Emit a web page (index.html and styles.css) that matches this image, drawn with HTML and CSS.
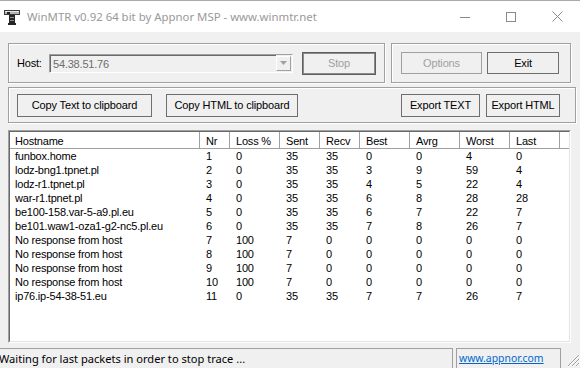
FILE: index.html
```html
<!DOCTYPE html>
<html lang="en">
<head>
    <meta charset="UTF-8">
    <title>WinMTR</title>
    <link rel="stylesheet" href="styles.css">
</head>
<body>
    <div class="titlebar">
        <svg class="app-icon" width="16" height="16" viewBox="0 0 16 16">
            <rect x="0.5" y="1.5" width="15" height="4" fill="#b4b4b4" stroke="#3a3a3a"/>
            <rect x="1" y="2" width="14" height="1" fill="#e6e6e6"/>
            <rect x="3" y="3" width="3" height="2" fill="#222"/>
            <rect x="5" y="6" width="6" height="9" fill="#262626"/>
            <rect x="6" y="8" width="4" height="1" fill="#8a8a8a"/>
            <rect x="6" y="11" width="4" height="1" fill="#8a8a8a"/>
            <rect x="4" y="14" width="8" height="2" fill="#262626"/>
        </svg>
        <span class="title">WinMTR v0.92 64 bit by Appnor MSP - www.winmtr.net</span>
        <div class="caption-btns">
            <span class="cap-btn">
                <svg width="10" height="10" viewBox="0 0 10 10"><path d="M0 5.5h10" stroke="#8a8a8a"/></svg>
            </span>
            <span class="cap-btn">
                <svg width="10" height="10" viewBox="0 0 10 10"><rect x="0.5" y="0.5" width="9" height="9" fill="none" stroke="#8a8a8a"/></svg>
            </span>
            <span class="cap-btn">
                <svg width="11" height="11" viewBox="0 0 11 11"><path d="M0.5 0.5l10 10M10.5 0.5l-10 10" stroke="#8a8a8a"/></svg>
            </span>
        </div>
    </div>

    <div class="client">
        <div class="row-top">
            <div class="group group-host">
                <span class="host-label">Host:</span>
                <div class="combo">
                    <span class="combo-text">54.38.51.76</span>
                    <span class="combo-drop">
                        <svg width="7" height="4" viewBox="0 0 7 4"><path d="M0 0h7L3.5 4z" fill="#a0a0a0"/></svg>
                    </span>
                </div>
                <button class="btn btn-default" disabled>Stop</button>
            </div>
            <div class="group group-opts">
                <button class="btn btn-options" disabled>Options</button>
                <button class="btn btn-exit">Exit</button>
            </div>
        </div>

        <div class="group group-export">
            <button class="btn btn-copy-text">Copy Text to clipboard</button>
            <button class="btn btn-copy-html">Copy HTML to clipboard</button>
            <button class="btn btn-export-text">Export TEXT</button>
            <button class="btn btn-export-html">Export HTML</button>
        </div>

        <div class="list">
            <div class="list-inner">
                <table>
                    <colgroup>
                        <col style="width:190px"><col style="width:30px"><col style="width:50px">
                        <col style="width:40px"><col style="width:40px"><col style="width:50px">
                        <col style="width:50px"><col style="width:50px"><col style="width:50px"><col>
                    </colgroup>
                    <thead>
                        <tr>
                            <th>Hostname</th><th>Nr</th><th>Loss %</th><th>Sent</th><th>Recv</th>
                            <th>Best</th><th>Avrg</th><th>Worst</th><th>Last</th><th class="filler"></th>
                        </tr>
                    </thead>
                    <tbody>
                        <tr><td>funbox.home</td><td>1</td><td>0</td><td>35</td><td>35</td><td>0</td><td>0</td><td>4</td><td>0</td><td></td></tr>
                        <tr><td>lodz-bng1.tpnet.pl</td><td>2</td><td>0</td><td>35</td><td>35</td><td>3</td><td>9</td><td>59</td><td>4</td><td></td></tr>
                        <tr><td>lodz-r1.tpnet.pl</td><td>3</td><td>0</td><td>35</td><td>35</td><td>4</td><td>5</td><td>22</td><td>4</td><td></td></tr>
                        <tr><td>war-r1.tpnet.pl</td><td>4</td><td>0</td><td>35</td><td>35</td><td>6</td><td>8</td><td>28</td><td>28</td><td></td></tr>
                        <tr><td>be100-158.var-5-a9.pl.eu</td><td>5</td><td>0</td><td>35</td><td>35</td><td>6</td><td>7</td><td>22</td><td>7</td><td></td></tr>
                        <tr><td>be101.waw1-oza1-g2-nc5.pl.eu</td><td>6</td><td>0</td><td>35</td><td>35</td><td>7</td><td>8</td><td>26</td><td>7</td><td></td></tr>
                        <tr><td>No response from host</td><td>7</td><td>100</td><td>7</td><td>0</td><td>0</td><td>0</td><td>0</td><td>0</td><td></td></tr>
                        <tr><td>No response from host</td><td>8</td><td>100</td><td>7</td><td>0</td><td>0</td><td>0</td><td>0</td><td>0</td><td></td></tr>
                        <tr><td>No response from host</td><td>9</td><td>100</td><td>7</td><td>0</td><td>0</td><td>0</td><td>0</td><td>0</td><td></td></tr>
                        <tr><td>No response from host</td><td>10</td><td>100</td><td>7</td><td>0</td><td>0</td><td>0</td><td>0</td><td>0</td><td></td></tr>
                        <tr><td>ip76.ip-54-38-51.eu</td><td>11</td><td>0</td><td>35</td><td>35</td><td>7</td><td>7</td><td>26</td><td>7</td><td></td></tr>
                    </tbody>
                </table>
            </div>
        </div>
    </div>

    <div class="statusbar">
        <div class="pane pane-main">Waiting for last packets in order to stop trace ...</div>
        <div class="pane pane-link"><a href="#">www.appnor.com</a></div>
        <svg class="grip" width="13" height="13" viewBox="0 0 13 13">
            <path d="M12 1L1 12M12 5L5 12M12 9L9 12" stroke="#a0a0a0"/>
            <path d="M13 1L1 13M13 5L5 13M13 9L9 13" stroke="#fff"/>
        </svg>
    </div>
</body>
</html>
```

FILE: styles.css
```css
body {
    margin: 0;
    width: 580px;
    height: 368px;
    overflow: hidden;
    background: #f0f0f0;
    font-family: 'Liberation Sans', Arial, sans-serif;
    font-size: 11px;
    color: #000;
}

/* title bar */
.titlebar {
    height: 31px;
    border-top: 1px solid #aaaaaa;
    background: #fff;
    display: flex;
    align-items: center;
}

.app-icon {
    margin-left: 4px;
    margin-right: 7px;
}

.title {
    font-family: 'Noto Sans', sans-serif;
    font-size: 11.4px;
    color: #999;
}

.caption-btns {
    margin-left: auto;
    display: flex;
    align-self: stretch;
}

.cap-btn {
    width: 46px;
    display: flex;
    align-items: center;
    justify-content: center;
}

/* client area */
.client {
    padding: 11px 0 0 8px;
}

.row-top {
    display: flex;
    gap: 6px;
    height: 40px;
}

.group {
    box-sizing: border-box;
    border: 1px solid #a0a0a0;
    box-shadow: inset 1px 1px 0 #fff, 1px 1px 0 #fff;
    display: flex;
    align-items: center;
}

.group-host {
    width: 377px;
    padding-left: 8px;
}

.host-label {
    width: 32px;
    letter-spacing: -0.2px;
}

.combo {
    box-sizing: border-box;
    width: 244px;
    height: 19px;
    border: 1px solid;
    border-color: #a0a0a0 #fff #fff #a0a0a0;
    display: flex;
    align-items: center;
}

.combo-text {
    flex: 1;
    align-self: stretch;
    display: flex;
    align-items: center;
    padding-left: 2px;
    color: #6d6d6d;
    letter-spacing: -0.2px;
    border-top: 1px solid #696969;
    border-left: 1px solid #696969;
}

.combo-drop {
    box-sizing: border-box;
    width: 15px;
    height: 15px;
    margin: 0 1px 0 0;
    border: 1px solid;
    border-color: #fff #a0a0a0 #a0a0a0 #fff;
    display: flex;
    align-items: center;
    justify-content: center;
}

.btn {
    box-sizing: border-box;
    height: 23px;
    padding: 0;
    background: #f0f0f0;
    border: 1px solid #6e6e6e;
    font-family: 'Liberation Sans', Arial, sans-serif;
    font-size: 11px;
    letter-spacing: -0.15px;
    color: #000;
}

.btn:disabled {
    color: #a0a0a0;
}

.btn-default {
    width: 74px;
    margin-left: 9px;
    border-color: #5e5e5e;
    box-shadow: inset 0 0 0 1px #8c8c8c;
}

.group-opts {
    width: 180px;
    padding-left: 9px;
    gap: 5px;
}

.btn-options {
    width: 81px;
    height: 22px;
    border-color: #a0a0a0;
}

.btn-exit {
    width: 72px;
    height: 22px;
}

.group-export {
    margin-top: 4px;
    width: 568px;
    height: 36px;
    padding-left: 8px;
}

.btn-copy-text {
    width: 135px;
}

.btn-copy-html {
    width: 132px;
    margin-left: 14px;
}

.btn-export-text {
    width: 79px;
    margin-left: 103px;
}

.btn-export-html {
    width: 74px;
    margin-left: 6px;
}

/* list view */
.list {
    box-sizing: border-box;
    margin-top: 7px;
    width: 563px;
    height: 213px;
    border: 1px solid;
    border-color: #a0a0a0 #fff #fff #a0a0a0;
}

.list-inner {
    height: 100%;
    box-sizing: border-box;
    border: 1px solid;
    border-color: #696969 #e3e3e3 #e3e3e3 #696969;
    background: #fff;
    overflow: hidden;
}

.list table {
    table-layout: fixed;
    border-collapse: separate;
    border-spacing: 0;
    width: 559px;
    letter-spacing: -0.2px;
}

.list th {
    box-sizing: border-box;
    height: 17px;
    padding: 1px 0 0 6px;
    text-align: left;
    font-weight: normal;
    border-right: 1px solid #a0a0a0;
    border-bottom: 1px solid #a0a0a0;
    box-shadow: inset 1px 0 0 #fff;
    white-space: nowrap;
    overflow: hidden;
}

.list th.filler {
    border-right: none;
}

.list td {
    height: 14px;
    line-height: 14px;
    padding: 0 0 0 6px;
    white-space: nowrap;
    overflow: hidden;
}

.list th:first-child,
.list td:first-child {
    padding-left: 5px;
}

/* status bar */
.statusbar {
    margin-top: 5px;
    height: 20px;
    display: flex;
    font-family: 'Noto Sans', sans-serif;
    font-size: 11.1px;
}

.pane {
    box-sizing: border-box;
    height: 20px;
    border-top: 1px solid #a0a0a0;
    border-right: 1px solid #a0a0a0;
    padding-top: 2px;
    white-space: nowrap;
}

.pane-main {
    width: 455px;
    margin-left: -2px;
    padding-left: 1px;
}

.pane-link {
    width: 105px;
    margin-left: 3px;
    padding-left: 2px;
    border-left: 1px solid #a0a0a0;
    font-size: 10.4px;
}

.pane-link a {
    color: #0066cc;
}

.grip {
    margin-left: auto;
    align-self: flex-end;
    margin-bottom: 1px;
}
```
